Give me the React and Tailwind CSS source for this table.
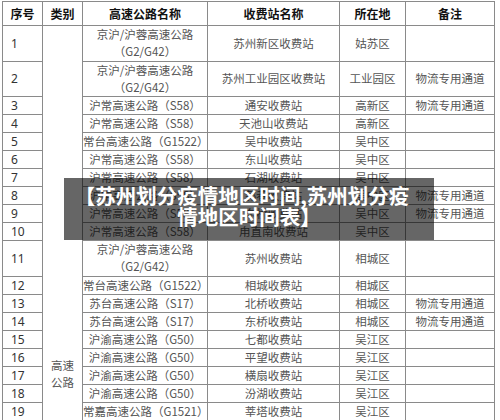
import React from "react";

const rows = [
  { no: "1", road: ["京沪/沪蓉高速公路", "（G2/G42）"], station: "苏州新区收费站", area: "姑苏区", note: "" },
  { no: "2", road: ["京沪/沪蓉高速公路", "（G2/G42）"], station: "苏州工业园区收费站", area: "工业园区", note: "物流专用通道" },
  { no: "3", road: ["沪常高速公路（S58）"], station: "通安收费站", area: "高新区", note: "物流专用通道" },
  { no: "4", road: ["沪常高速公路（S58）"], station: "天池山收费站", area: "高新区", note: "" },
  { no: "5", road: ["常台高速公路（G1522）"], station: "吴中收费站", area: "吴中区", note: "" },
  { no: "6", road: ["沪常高速公路（S58）"], station: "东山收费站", area: "吴中区", note: "" },
  { no: "7", road: ["沪常高速公路（S58）"], station: "石湖收费站", area: "吴中区", note: "" },
  { no: "8", road: ["沪常高速公路（S58）"], station: "郭巷收费站", area: "吴中区", note: "物流专用通道" },
  { no: "9", road: ["沪常高速公路（S58）"], station: "东桥收费站", area: "吴中区", note: "物流专用通道" },
  { no: "10", road: ["沪常高速公路（S58）"], station: "甪直南收费站", area: "吴中区", note: "" },
  { no: "11", road: ["京沪/沪蓉高速公路", "（G2/G42）"], station: "苏州收费站", area: "相城区", note: "" },
  { no: "12", road: ["常台高速公路（G1522）"], station: "相城收费站", area: "相城区", note: "" },
  { no: "13", road: ["苏台高速公路（S17）"], station: "北桥收费站", area: "相城区", note: "物流专用通道" },
  { no: "14", road: ["苏台高速公路（S17）"], station: "东桥收费站", area: "相城区", note: "物流专用通道" },
  { no: "15", road: ["沪渝高速公路（G50）"], station: "七都收费站", area: "吴江区", note: "" },
  { no: "16", road: ["沪渝高速公路（G50）"], station: "平望收费站", area: "吴江区", note: "" },
  { no: "17", road: ["沪渝高速公路（G50）"], station: "横扇收费站", area: "吴江区", note: "" },
  { no: "18", road: ["沪渝高速公路（G50）"], station: "汾湖收费站", area: "吴江区", note: "" },
  { no: "19", road: ["常嘉高速公路（G1521）"], station: "莘塔收费站", area: "吴江区", note: "" },
];

const cell = "border border-[#8a8a8a] p-0 align-middle whitespace-nowrap overflow-hidden";

const App = () => {
  return (
    <div className="relative w-[500px] h-[420px] overflow-hidden bg-white font-['Noto_Sans_CJK_SC',sans-serif]">
      <table className="ml-[2px] mt-[1px] border-collapse table-fixed w-[492px] text-[11.5px] leading-[17px]">
        <colgroup>
          <col className="w-[40px]" />
          <col className="w-[40px]" />
          <col className="w-[125px]" />
          <col className="w-[132px]" />
          <col className="w-[66px]" />
          <col className="w-[89px]" />
        </colgroup>
        <thead>
          <tr className="h-[24px] font-bold text-[#111] text-[12px]">
            <th className={cell}>序号</th>
            <th className={cell}>类别</th>
            <th className={cell}>高速公路名称</th>
            <th className={cell}>收费站名称</th>
            <th className={cell}>所在地</th>
            <th className={cell}>备注</th>
          </tr>
        </thead>
        <tbody className="text-[#555]">
          {rows.map((r, i) => (
            <tr key={r.no} className={r.road.length > 1 ? "h-[35.5px]" : "h-[17.6px]"}>
              <td className={`${cell} pl-[8px] text-left text-[#333] font-['Noto_Sans',sans-serif] text-[12px]`}>{r.no}</td>
              {i === 0 && (
                <td rowSpan={rows.length + 1} className={`${cell} align-top text-center pt-[331px]`}>
                  高速
                  <br />
                  公路
                </td>
              )}
              <td className={`${cell} text-center`}>
                {r.road.map((line) => (
                  <div key={line}>{line}</div>
                ))}
              </td>
              <td className={`${cell} text-center`}>{r.station}</td>
              <td className={`${cell} text-center`}>{r.area}</td>
              <td className={`${cell} text-center`}>{r.note}</td>
            </tr>
          ))}
          <tr className="h-[17.6px]">
            <td className={`${cell} pl-[8px]`}></td>
            <td className={cell}></td>
            <td className={cell}></td>
            <td className={cell}></td>
            <td className={cell}></td>
          </tr>
        </tbody>
      </table>

      {/* title banner over the table */}
      <div className="absolute left-[64px] top-[178px] w-[370px] h-[62px] bg-black/60 pt-[7px] text-center text-white font-bold text-[20.5px] leading-[21px] whitespace-nowrap">
        <div className="-ml-[14px]">【苏州划分疫情地区时间,苏州划分疫</div>
        <div>情地区时间表】</div>
      </div>
    </div>
  );
};

export default App;
